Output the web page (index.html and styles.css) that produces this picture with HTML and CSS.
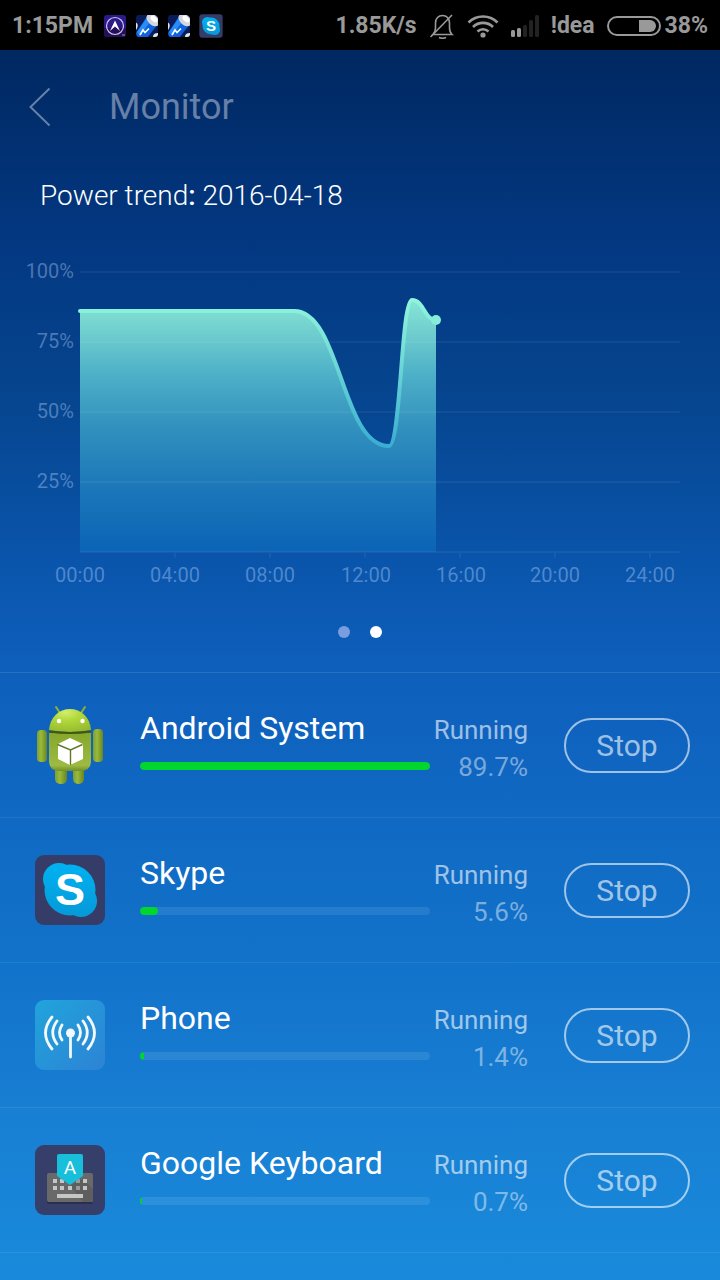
FILE: index.html
```html
<!DOCTYPE html>
<html lang="en">
<head>
  <meta charset="UTF-8" />
  <meta name="viewport" content="width=device-width, initial-scale=1" />
  <title>Monitor</title>
  <link rel="stylesheet" href="styles.css">
</head>
<body>
  <div class="status-bar">
    <div class="status-left">
      <span class="clock">1:15PM</span>
      <svg class="notif" viewBox="0 0 24 24">
        <rect x="1" y="1" width="22" height="22" rx="3" fill="#2c1a88"/>
        <path d="M1 14h22v6q0 3-3 3H4q-3 0-3-3z" fill="#241058"/>
        <circle cx="12" cy="12" r="8.500" fill="none" stroke="#cfc8ee" stroke-width="1.200"/>
        <path d="M7 17 12 6.500 17 17l-5-4.500z" fill="#fff"/>
        <path d="M19 21h3" stroke="#9a90c8"/>
      </svg>
      <svg class="notif" viewBox="0 0 24 24">
        <use href="#battery-app"/>
      </svg>
      <svg class="notif" viewBox="0 0 24 24">
        <use href="#battery-app"/>
      </svg>
      <svg class="notif" viewBox="-1 -1 72 72">
        <use href="#skype"/>
        <text class="skype-letter" x="35" y="50">S</text>
      </svg>
    </div>
    <div class="status-right">
      <span>1.85K/s</span>
      <svg class="bell" viewBox="0 0 26 26" fill="none" stroke="#999" stroke-width="1.600">
        <path d="M4 21.500h19c-2-2-2.500-4-2.500-7V10c0-4.500-3-7.500-7-7.500S6.500 5.500 6.500 10v5c0 2.500-.5 4.500-2.500 6.500z"/>
        <path d="M1.500 24 23 2"/>
        <path d="M10 24.500q3.500 1.500 7 0"/>
      </svg>
      <svg class="wifi" viewBox="0 0 32 24" fill="none" stroke="#999" stroke-width="2.600">
        <path d="M1.500 8.500a20.500 20.500 0 0 1 29 0"/>
        <path d="M6 13a14.200 14.200 0 0 1 20 0"/>
        <path d="M10.500 17.500a7.800 7.800 0 0 1 11 0"/>
        <circle cx="16" cy="21" r="2.600" fill="#999" stroke="none"/>
      </svg>
      <svg class="signal" viewBox="0 0 28 24">
        <rect x="0" y="16" width="4" height="7" rx="1.500" fill="#999"/>
        <rect x="6" y="14" width="4" height="9" rx="1.500" fill="#999"/>
        <rect x="12" y="11" width="4" height="12" rx="1.500" fill="#222"/>
        <rect x="18" y="6" width="4" height="17" rx="1.500" fill="#222"/>
        <rect x="24" y="1" width="4" height="22" rx="1.500" fill="#222"/>
      </svg>
      <span>!dea</span>
      <div class="charge">
        <svg class="battery" viewBox="0 0 54 20">
          <rect x="1" y="1" width="52" height="18" rx="9" fill="none" stroke="#999" stroke-width="2"/>
          <path d="M32 4h11a6 6 0 0 1 0 12H32z" fill="#999"/>
        </svg>
        <span>38%</span>
      </div>
    </div>
  </div>

  <header class="top-bar">
    <button class="back" aria-label="Back">
      <svg viewBox="0 0 22 40" fill="none" stroke="currentColor" stroke-width="2">
        <path d="M20.500 1.500 1.500 20l19 18.500"/>
      </svg>
    </button>
    <h1>Monitor</h1>
  </header>

  <main>
    <h2 class="trend-title">Power trend<b>:</b> 2016-04-18</h2>

    <svg class="chart" viewBox="0 0 720 375" role="img" aria-label="Power trend">
      <defs>
        <linearGradient id="area" gradientUnits="userSpaceOnUse" x1="0" y1="75" x2="0" y2="327">
          <stop offset="0" stop-color="#86e6d6"/>
          <stop offset="0.080" stop-color="#79d7d0"/>
          <stop offset="0.280" stop-color="#50b3c8"/>
          <stop offset="0.500" stop-color="#3291be"/>
          <stop offset="0.750" stop-color="#1b77b9"/>
          <stop offset="1" stop-color="#0b64b6"/>
        </linearGradient>
        <linearGradient id="line" gradientUnits="userSpaceOnUse" x1="0" y1="75" x2="0" y2="221">
          <stop offset="0" stop-color="#8ff5dc"/>
          <stop offset="0.300" stop-color="#78e2d8"/>
          <stop offset="1" stop-color="#3aadd2"/>
        </linearGradient>
      </defs>
      <path fill="url(#area)" d="M80 86H294C341 86 341 221 389 221C401 221 401 75 412 75C424 75 424 95 436 95V327H80z"/>
      <path class="grid" d="M80 47H680M80 117H680M80 187H680M80 257H680M80 327H680"/>
      <path class="grid" d="M175 328v5M270 328v5M365 328v5M460 328v5M555 328v5M650 328v5"/>
      <path fill="none" stroke="url(#line)" stroke-width="4" stroke-linecap="round" d="M80 86H294C341 86 341 221 389 221C401 221 401 75 412 75C424 75 424 95 436 95"/>
      <circle cx="436" cy="95" r="5" fill="#86edd8"/>
      <g class="labels-y">
        <text x="74" y="53">100%</text>
        <text x="74" y="123">75%</text>
        <text x="74" y="193">50%</text>
        <text x="74" y="263">25%</text>
      </g>
      <g class="labels-x">
        <text x="80" y="357">00:00</text>
        <text x="175" y="357">04:00</text>
        <text x="270" y="357">08:00</text>
        <text x="366" y="357">12:00</text>
        <text x="461" y="357">16:00</text>
        <text x="555" y="357">20:00</text>
        <text x="650" y="357">24:00</text>
      </g>
    </svg>

    <div class="pager">
      <button aria-label="Page 1"></button>
      <button class="active" aria-label="Page 2"></button>
    </div>

    <ul class="apps">
      <li>
        <svg class="icon android" viewBox="0 0 70 80">
          <defs>
            <linearGradient id="limb" x1="0" x2="1" y1="0" y2="0">
              <stop offset="0" stop-color="#7f9e2c"/>
              <stop offset="0.400" stop-color="#9aba3c"/>
              <stop offset="1" stop-color="#68851f"/>
            </linearGradient>
            <linearGradient id="torso" x1="0" x2="0" y1="0" y2="1">
              <stop offset="0" stop-color="#86a62c"/>
              <stop offset="0.850" stop-color="#9dbb42"/>
              <stop offset="1" stop-color="#6f8f28"/>
            </linearGradient>
            <radialGradient id="head" cx="0.400" cy="0.150" r="0.900">
              <stop offset="0" stop-color="#d2ee6c"/>
              <stop offset="0.400" stop-color="#b0d83a"/>
              <stop offset="1" stop-color="#96b92e"/>
            </radialGradient>
          </defs>
          <path d="M21 2l4 6M50 2l-4 6" stroke="#8fb22f" stroke-width="2" stroke-linecap="round"/>
          <rect x="20" y="60" width="12" height="19" rx="5" fill="url(#limb)"/>
          <rect x="38" y="60" width="11" height="19" rx="5" fill="url(#limb)"/>
          <rect x="2" y="25" width="10" height="32" rx="4" fill="url(#limb)"/>
          <rect x="58" y="24" width="10" height="33" rx="4" fill="url(#limb)"/>
          <path d="M14 28h42v28q0 10-11 10H25q-11 0-11-10z" fill="url(#torso)"/>
          <path d="M14 25C15 12 24 4 35 4s20 8 21 21q-21 4-42 0z" fill="url(#head)"/>
          <path d="M14 26.500q21 3 42 0" fill="none" stroke="#43580f" stroke-width="1.800"/>
          <circle cx="24" cy="16" r="2.200" fill="#fff"/>
          <circle cx="47.500" cy="16" r="2.200" fill="#fff"/>
          <path d="M35 33l13 6v15l-13 6-12-6V39z" fill="#fff"/>
          <path d="M22.500 39.500 35.500 45l12-5.500M35.500 45v15" fill="none" stroke="#5f7a24" stroke-width="1.400"/>
        </svg>
        <div class="app-info">
          <h3>Android System</h3>
          <div class="bar"><div class="fill" style="width: 100%"></div></div>
        </div>
        <div class="app-state">
          <span class="state">Running</span>
          <span class="percent">89.7%</span>
        </div>
        <button class="stop">Stop</button>
      </li>
      <li>
        <svg class="icon" viewBox="0 0 70 70">
          <defs>
            <linearGradient id="skypeBlue" gradientUnits="userSpaceOnUse" x1="0" x2="0" y1="8" y2="62">
              <stop offset="0" stop-color="#00b2f2"/>
              <stop offset="1" stop-color="#0699d8"/>
            </linearGradient>
            <g id="skype">
              <rect width="70" height="70" rx="9" fill="#363c68"/>
              <g fill="url(#skypeBlue)">
                <circle cx="35" cy="35" r="25.500"/>
                <circle cx="24" cy="24" r="16"/>
                <circle cx="46" cy="46" r="16"/>
              </g>
            </g>
          </defs>
          <use href="#skype"/>
          <text class="skype-letter" x="35" y="50">S</text>
        </svg>
        <div class="app-info">
          <h3>Skype</h3>
          <div class="bar"><div class="fill" style="width: 6.2%"></div></div>
        </div>
        <div class="app-state">
          <span class="state">Running</span>
          <span class="percent">5.6%</span>
        </div>
        <button class="stop">Stop</button>
      </li>
      <li>
        <svg class="icon" viewBox="0 0 70 70">
          <defs>
            <linearGradient id="phoneBg" x1="0" y1="0" x2="1" y2="1">
              <stop offset="0" stop-color="#20a4dc"/>
              <stop offset="1" stop-color="#2d83d4"/>
            </linearGradient>
          </defs>
          <rect width="70" height="70" rx="9" fill="url(#phoneBg)"/>
          <g fill="none" stroke="#f2f8fc" stroke-width="2.800" stroke-linecap="round">
            <path d="M35.500 34v23"/>
            <path d="M27 25q-5 7.500 0 15M22 21q-8.500 11.500 0 23M17 17q-13 16 0 32"/>
            <path d="M43 25q5 7.500 0 15M48 21q8.500 11.500 0 23M53 17q13 16 0 32"/>
          </g>
          <circle cx="35.500" cy="33" r="4.500" fill="#f2f8fc"/>
        </svg>
        <div class="app-info">
          <h3>Phone</h3>
          <div class="bar"><div class="fill" style="width: 1.4%"></div></div>
        </div>
        <div class="app-state">
          <span class="state">Running</span>
          <span class="percent">1.4%</span>
        </div>
        <button class="stop">Stop</button>
      </li>
      <li>
        <svg class="icon" viewBox="0 0 70 70">
          <rect width="70" height="70" rx="9" fill="#363e6a"/>
          <rect x="12" y="29" width="46" height="30" rx="2" fill="#2a2f50"/>
          <rect x="12" y="28" width="46" height="29" rx="2" fill="#696969"/>
          <path d="M35 40l13-6 10 10v13H48z" fill="#5e5e5e"/>
          <g fill="#c6c6c6">
            <path d="M18 34h4v4h-4zM25 34h4v4h-4zM48 34h4v4h-4z"/>
            <path d="M18 41h4v4h-4zM25 41h4v4h-4zM33 41h4v4h-4zM48 41h4v4h-4z"/>
            <path d="M22 49h26v4H22z"/>
          </g>
          <path d="M41 34h4v4h-4zM41 41h4v4h-4z" fill="#999"/>
          <path d="M22 11q0-2 2-2h22q2 0 2 2v20L35 40 22 31z" fill="#17bfdb"/>
          <text class="key-letter" x="35" y="29">A</text>
        </svg>
        <div class="app-info">
          <h3>Google Keyboard</h3>
          <div class="bar"><div class="fill" style="width: 0.7%"></div></div>
        </div>
        <div class="app-state">
          <span class="state">Running</span>
          <span class="percent">0.7%</span>
        </div>
        <button class="stop">Stop</button>
      </li>
    </ul>
  </main>

  <!-- shared battery notification icon -->
  <svg class="sprite" aria-hidden="true">
    <defs>
      <clipPath id="notifClip"><rect x="1" y="1" width="22" height="22" rx="3"/></clipPath>
      <g id="battery-app" clip-path="url(#notifClip)">
        <rect width="24" height="24" fill="#0a1c58"/>
        <path d="M1 19 13 1l10 9-11 14H2z" fill="#0f62dd"/>
        <path d="M2 18 13 2l4 3L5 22z" fill="#2c8cf5"/>
        <ellipse cx="18" cy="6" rx="7.500" ry="5" transform="rotate(42 18 6)" fill="#d4d8dd"/>
        <ellipse cx="19" cy="5" rx="4" ry="2.500" transform="rotate(42 19 5)" fill="#fff"/>
        <path d="M0 8q5 2 1 8H0zM18 23q0-4 5-4v5z" fill="#dfe6f2"/>
        <path d="M5 21l3-5 2 2.500 4-4" fill="none" stroke="#fff" stroke-width="1.600"/>
      </g>
    </defs>
  </svg>
</body>
</html>
```
FILE: styles.css
```css
* {
  box-sizing: border-box;
}

html {
  background-color: #198adb;
}

body {
  margin: 0;
  min-height: 100vh;
  font-family: Roboto, sans-serif;
  color: #fff;
  background: linear-gradient(#002861 50px, #033780 230px, #06458f 400px, #0a56ad 570px, #0e5fbc 672px, #106ac3 830px, #1273ca 970px, #187fd3 1110px, #198adb 1280px);
}

h1, h2, h3, ul {
  margin: 0;
  padding: 0;
  font-weight: 400;
}

button {
  padding: 0;
  border: none;
  background: none;
  font-family: inherit;
  cursor: pointer;
}

svg {
  display: block;
  flex: none;
}

/* Status bar */
.status-bar {
  display: flex;
  justify-content: space-between;
  align-items: center;
  height: 50px;
  padding: 2px 12px 0;
  background-color: #000;
  color: #999;
  font-size: 23px;
  font-weight: 700;
  line-height: 28px;
}

.status-left, .status-right, .charge {
  display: flex;
  align-items: center;
}

.status-left {
  gap: 8px;
}

.status-right {
  gap: 12px;
}

.charge {
  gap: 4px;
}

.clock {
  margin-right: 2px;
}

.notif {
  width: 24px;
  height: 24px;
}

.bell {
  width: 26px;
  height: 26px;
}

.wifi {
  width: 32px;
  height: 24px;
}

.signal {
  width: 28px;
  height: 24px;
}

.battery {
  width: 54px;
  height: 20px;
}

/* Header */
.top-bar {
  display: flex;
  align-items: center;
  gap: 58px;
  height: 114px;
  padding: 0 29px;
  color: #6680a8;
}

.top-bar h1 {
  font-size: 36px;
}

.back {
  color: inherit;
}

.back svg {
  width: 22px;
  height: 40px;
}

/* Chart */
.trend-title {
  padding: 2px 40px 0;
  font-size: 28px;
  font-weight: 300;
  line-height: 59px;
}

.trend-title b {
  font-weight: 500;
}

.chart {
  width: 100%;
}

.grid {
  fill: none;
  stroke: #fff;
  stroke-opacity: 0.05;
  stroke-width: 2;
}

.labels-x, .labels-y {
  fill: #c4dcff;
  fill-opacity: 0.38;
  font-size: 20px;
}

.labels-x {
  text-anchor: middle;
}

.labels-y {
  text-anchor: end;
}

.pager {
  display: flex;
  justify-content: center;
  gap: 20px;
  padding: 26px 0 34px;
}

.pager button {
  width: 12px;
  height: 12px;
  border-radius: 50%;
  background-color: #7a9de0;
}

.pager .active {
  background-color: #fff;
}

/* App list */
.apps {
  list-style: none;
  border-top: 1px solid rgba(255, 255, 255, 0.1);
}

.apps li {
  display: flex;
  align-items: center;
  height: 145px;
  padding: 0 30px 0 35px;
  border-bottom: 1px solid rgba(255, 255, 255, 0.08);
}

.icon {
  width: 70px;
  height: 70px;
  margin-right: 35px;
}

.android {
  height: 80px;
}

.skype-letter {
  fill: #fff;
  font-family: "Liberation Sans", Arial, sans-serif;
  font-size: 45px;
  font-weight: 700;
  text-anchor: middle;
}

.key-letter {
  fill: #fff;
  font-size: 19px;
  text-anchor: middle;
}

.app-info {
  flex: 1;
  padding-bottom: 12px;
}

.app-info h3 {
  font-size: 32px;
  line-height: 40px;
  white-space: nowrap;
}

.bar {
  height: 8px;
  margin-top: 14px;
  border-radius: 4px;
  background-color: rgba(255, 255, 255, 0.09);
  overflow: hidden;
}

.fill {
  height: 100%;
  border-radius: 4px;
  background-color: #00d62d;
}

.app-state {
  display: flex;
  flex-direction: column;
  width: 98px;
  padding-top: 8px;
  font-size: 26px;
  line-height: 37px;
  text-align: right;
}

.state {
  color: rgba(255, 255, 255, 0.6);
}

.percent {
  color: rgba(255, 255, 255, 0.45);
}

.stop {
  width: 126px;
  height: 55px;
  margin-left: 36px;
  border: 2px solid rgba(255, 255, 255, 0.6);
  border-radius: 28px;
  color: rgba(255, 255, 255, 0.62);
  font-size: 30px;
}

.sprite {
  position: absolute;
  width: 0;
  height: 0;
}
```
